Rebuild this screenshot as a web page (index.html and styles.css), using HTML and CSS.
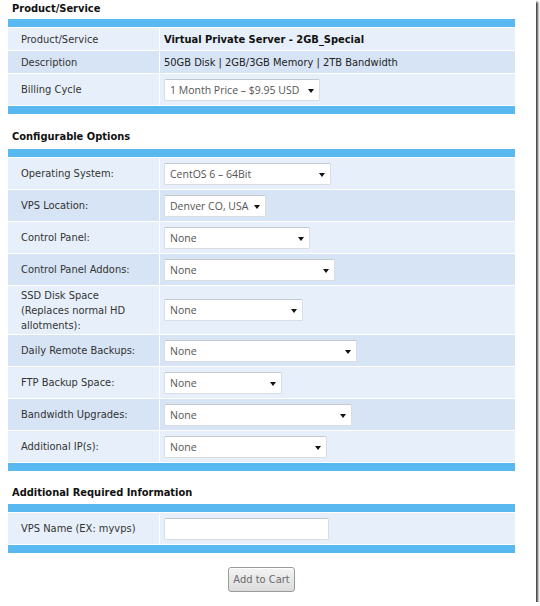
FILE: index.html
```html
<!DOCTYPE html>
<html lang="en">
<head>
<meta charset="utf-8">
<title>Order Form</title>
<link rel="stylesheet" href="styles.css">
</head>
<body>
<div class="sheet">
  <form class="order">
    <h3 class="section-title first">Product/Service</h3>
    <table class="grid">
      <tr class="bar"><td colspan="2"></td></tr>
      <tr class="row light short"><td class="label">Product/Service</td><td class="value"><strong>Virtual Private Server - 2GB_Special</strong></td></tr>
      <tr class="row dark short"><td class="label">Description</td><td class="value">50GB Disk | 2GB/3GB Memory | 2TB Bandwidth</td></tr>
      <tr class="row light"><td class="label">Billing Cycle</td><td class="value"><span class="select" style="width:156px">1 Month Price – $9.95 USD</span></td></tr>
      <tr class="bar"><td colspan="2"></td></tr>
    </table>

    <h3 class="section-title">Configurable Options</h3>
    <table class="grid">
      <tr class="bar"><td colspan="2"></td></tr>
      <tr class="row light"><td class="label">Operating System:</td><td class="value"><span class="select" style="width:167px">CentOS 6 – 64Bit</span></td></tr>
      <tr class="row dark"><td class="label">VPS Location:</td><td class="value"><span class="select" style="width:102px">Denver CO, USA</span></td></tr>
      <tr class="row light"><td class="label">Control Panel:</td><td class="value"><span class="select" style="width:146px">None</span></td></tr>
      <tr class="row dark"><td class="label">Control Panel Addons:</td><td class="value"><span class="select" style="width:171px">None</span></td></tr>
      <tr class="row light tall"><td class="label">SSD Disk Space<br>(Replaces normal HD<br>allotments):</td><td class="value"><span class="select" style="width:139px">None</span></td></tr>
      <tr class="row dark"><td class="label">Daily Remote Backups:</td><td class="value"><span class="select" style="width:193px">None</span></td></tr>
      <tr class="row light"><td class="label">FTP Backup Space:</td><td class="value"><span class="select" style="width:118px">None</span></td></tr>
      <tr class="row dark"><td class="label">Bandwidth Upgrades:</td><td class="value"><span class="select" style="width:188px">None</span></td></tr>
      <tr class="row light"><td class="label">Additional IP(s):</td><td class="value"><span class="select" style="width:163px">None</span></td></tr>
      <tr class="bar"><td colspan="2"></td></tr>
    </table>

    <h3 class="section-title last">Additional Required Information</h3>
    <table class="grid">
      <tr class="bar"><td colspan="2"></td></tr>
      <tr class="row light"><td class="label">VPS Name (EX: myvps)</td><td class="value"><input class="text-input" type="text"></td></tr>
      <tr class="bar"><td colspan="2"></td></tr>
    </table>

    <div class="actions">
      <button class="cart-button" type="button">Add to Cart</button>
    </div>
  </form>
</div>
</body>
</html>
```

FILE: styles.css
```css
html, body {
  margin: 0;
  padding: 0;
  background: #ffffff;
}

.sheet {
  width: 536px;
  height: 602px;
  background: #ffffff;
  box-shadow: 2px 2px 2px rgba(0, 0, 0, 0.75);
  overflow: hidden;
}

.order {
  padding-left: 7px;
  font-family: "DejaVu Sans Condensed", "DejaVu Sans", sans-serif;
  font-size: 11px;
  color: #333333;
}

.section-title {
  margin: 0;
  padding: 15px 0 4px 5px;
  font-size: 11px;
  line-height: 14px;
  font-weight: bold;
  color: #111111;
}

.section-title.first {
  padding-top: 2px;
  padding-bottom: 2px;
}

.section-title.last {
  padding-top: 14px;
  padding-bottom: 3px;
}

.grid {
  width: 509px;
  border-collapse: separate;
  border-spacing: 1px;
  background: #ffffff;
}

.grid td {
  padding: 0;
}

.bar td {
  height: 8px;
  background: #5ab8f0;
}

.row td {
  height: 31px;
  vertical-align: middle;
}

.row.short td {
  height: 22px;
}

.row.tall td {
  height: 48px;
}

.row.light td {
  background: #e7f0fa;
}

.row.dark td {
  background: #d6e4f5;
}

.label {
  width: 138px;
  padding-left: 13px !important;
  line-height: 15px;
  color: #333333;
}

.value {
  padding-left: 4px !important;
  color: #222222;
}

.value strong {
  color: #111111;
}

.select {
  position: relative;
  display: inline-block;
  box-sizing: border-box;
  height: 22px;
  line-height: 20px;
  padding-left: 5px;
  background: #ffffff;
  border: 1px solid #d8dde3;
  border-top-color: #c3c8ce;
  border-radius: 2px;
  font-family: "Open Sans", "Noto Sans", sans-serif;
  font-size: 10.5px;
  color: #555555;
  vertical-align: middle;
  white-space: nowrap;
}

/* dropdown caret */
.select::after {
  content: "";
  position: absolute;
  right: 5px;
  top: 9px;
  border-left: 3px solid transparent;
  border-right: 3px solid transparent;
  border-top: 4px solid #111111;
}

.text-input {
  box-sizing: border-box;
  width: 165px;
  height: 22px;
  margin: 0;
  padding: 0 4px;
  background: #ffffff;
  border: 1px solid #d8dde3;
  border-top-color: #c3c8ce;
  border-radius: 2px;
  vertical-align: middle;
}

.actions {
  width: 509px;
  padding-top: 13px;
  display: flex;
  justify-content: center;
}

.cart-button {
  width: 67px;
  height: 25px;
  padding: 0;
  font-family: "DejaVu Sans Condensed", "DejaVu Sans", sans-serif;
  font-size: 11px;
  color: #6a6a6a;
  background: linear-gradient(#f4f4f4, #dcdcdc);
  border: 1px solid #9a9a9a;
  border-radius: 3px;
  box-shadow: inset 0 1px 0 #ffffff;
}
```
